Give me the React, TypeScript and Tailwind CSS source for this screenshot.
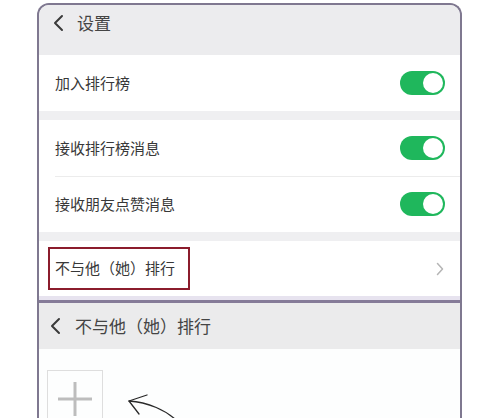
import React from 'react';

const font = { fontFamily: '"Noto Sans CJK SC", "Noto Sans", sans-serif' };

const Toggle = () => (
  <div className="w-[45px] h-[24px] rounded-full bg-[#1fb75c] flex items-center justify-end pr-[2px]">
    <div className="w-[20px] h-[20px] rounded-full bg-white" />
  </div>
);

const BackArrow = () => (
  <svg width="12" height="18" viewBox="0 0 12 18" fill="none">
    <polyline points="9,2 2,9 9,16" stroke="#3a3a3a" strokeWidth="2" strokeLinecap="round" strokeLinejoin="round" />
  </svg>
);

const ToggleRow = ({ label }: { label: string }) => (
  <div className="h-[56px] flex items-center justify-between pl-[16px] pr-[15px]">
    <span className="text-[15px] text-[#383838]">{label}</span>
    <Toggle />
  </div>
);

export default function App() {
  return (
    <div className="w-[500px] h-[418px] bg-white overflow-hidden pt-[3px]" style={font}>
      <div className="ml-[37px] w-[425px] h-[420px] border-2 border-b-0 border-[#7f7890] rounded-t-[12px] overflow-hidden flex flex-col bg-[#fdfdfd]">
        <div className="h-[50px] shrink-0 bg-[#ececee] flex items-start pt-[5px] pl-[14px] gap-[12px]">
          <div className="h-[26px] flex items-center">
            <BackArrow />
          </div>
          <span className="text-[17px] leading-[26px] text-[#444]">设置</span>
        </div>

        <div className="bg-white shrink-0">
          <ToggleRow label="加入排行榜" />
        </div>
        <div className="h-[9px] shrink-0 bg-[#efeff1]" />

        <div className="bg-white shrink-0">
          <ToggleRow label="接收排行榜消息" />
          <div className="ml-[16px] h-px bg-[#ececec]" />
          <div className="-mt-px">
            <ToggleRow label="接收朋友点赞消息" />
          </div>
        </div>
        <div className="h-[9px] shrink-0 bg-[#efeff1]" />

        <div className="bg-white shrink-0 h-[55px] flex items-center justify-between pl-[9px] pr-[16px]">
          <div className="h-[43px] w-[142px] border-2 border-[#8b1c2c] flex items-center pl-[5px]">
            <span className="text-[15px] text-[#383838]">不与他（她）排行</span>
          </div>
          <svg width="8" height="14" viewBox="0 0 8 14" fill="none">
            <polyline points="1.5,1.5 6.5,7 1.5,12.5" stroke="#b5b5b5" strokeWidth="1.5" strokeLinecap="round" strokeLinejoin="round" />
          </svg>
        </div>
        <div className="h-[4px] shrink-0 bg-[#e7e3ef]" />
        <div className="h-[3px] shrink-0 bg-[#857b98]" />

        <div className="h-[46px] shrink-0 bg-[#ebebec] flex items-center pl-[11px] gap-[13px]">
          <BackArrow />
          <span className="text-[17px] text-[#444]">不与他（她）排行</span>
        </div>

        <div className="flex items-start pl-[8px] pt-[21px] bg-[#fdfefe] flex-1">
          <div className="w-[56px] h-[60px] border border-[#dedede] flex items-start justify-center pt-[10px]">
            <svg width="36" height="36" viewBox="0 0 36 36">
              <line x1="18" y1="1" x2="18" y2="35" stroke="#bdbdbd" strokeWidth="3" />
              <line x1="1" y1="18" x2="35" y2="18" stroke="#bdbdbd" strokeWidth="3" />
            </svg>
          </div>
          <svg className="ml-[24px] mt-[8px]" width="80" height="50" viewBox="0 0 80 50" fill="none">
            <path d="M2 23 C 20 24, 40 32, 52 45" stroke="#2a2a2a" strokeWidth="1.3" strokeLinecap="round" />
            <path d="M20 17 L2 23 L12 36" stroke="#2a2a2a" strokeWidth="1.3" strokeLinecap="round" strokeLinejoin="round" />
          </svg>
        </div>
      </div>
    </div>
  );
}
